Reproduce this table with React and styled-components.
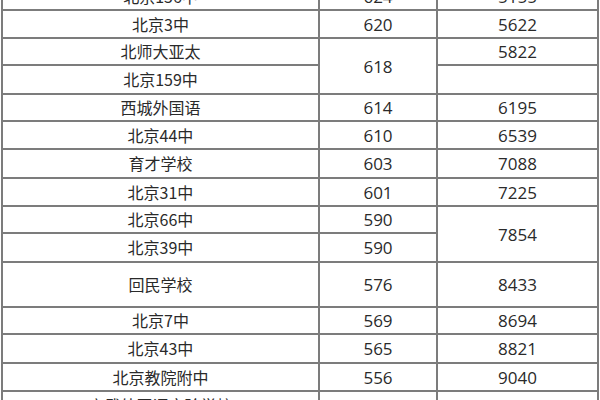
import React from 'react'
import styled, { createGlobalStyle } from 'styled-components'

const GlobalStyle = createGlobalStyle`
  html, body {
    margin: 0;
    padding: 0;
    background: #fff;
  }
`

const Frame = styled.div`
  width: 600px;
  height: 400px;
  overflow: hidden;
  padding-left: 1px;
  box-sizing: border-box;
`

const Table = styled.table`
  margin-top: -19px;
  width: 596px;
  border-collapse: collapse;
  table-layout: fixed;
  font-family: "Noto Sans CJK SC", "Liberation Sans", sans-serif;
  color: #2a2a2a;
  font-size: 16px;
`

const Row = styled.tr`
  height: ${p => p.h}px;
`

const Cell = styled.td`
  border: 2px solid #7c7c7c;
  text-align: center;
  vertical-align: ${p => (p.top ? 'top' : 'middle')};
  padding: 0;
  line-height: 25px;
`

const Num = styled(Cell)`
  font-family: "Open Sans", "Liberation Sans", sans-serif;
  font-size: 17px;
`

const rows = [
  { h: 28, name: '北京156中', score: '624', rank: '5155' },
  { h: 28, name: '北京3中', score: '620', rank: '5622' },
  { h: 27, name: '北师大亚太', score: '618', rank: '5822', scoreSpan: 2, rankTop: true },
  { h: 29, name: '北京159中', skipScore: true, rank: '' },
  { h: 27, name: '西城外国语', score: '614', rank: '6195' },
  { h: 28, name: '北京44中', score: '610', rank: '6539' },
  { h: 29, name: '育才学校', score: '603', rank: '7088' },
  { h: 28, name: '北京31中', score: '601', rank: '7225' },
  { h: 27, name: '北京66中', score: '590', rank: '7854', rankSpan: 2 },
  { h: 29, name: '北京39中', score: '590', skipRank: true },
  { h: 45, name: '回民学校', score: '576', rank: '8433' },
  { h: 27, name: '北京7中', score: '569', rank: '8694' },
  { h: 29, name: '北京43中', score: '565', rank: '8821' },
  { h: 28, name: '北京教院附中', score: '556', rank: '9040' },
  { h: 28, name: '宣武外国语实验学校', score: '555', rank: '9050' },
]

export default function App() {
  return (
    <Frame>
      <GlobalStyle />
      <Table>
        <colgroup>
          <col style={{ width: 317 }} />
          <col style={{ width: 118 }} />
          <col style={{ width: 161 }} />
        </colgroup>
        <tbody>
          {rows.map((r, i) => (
            <Row key={i} h={r.h}>
              <Cell>{r.name}</Cell>
              {!r.skipScore && <Num rowSpan={r.scoreSpan || 1}>{r.score}</Num>}
              {!r.skipRank && (
                <Num rowSpan={r.rankSpan || 1} top={r.rankTop}>
                  {r.rank}
                </Num>
              )}
            </Row>
          ))}
        </tbody>
      </Table>
    </Frame>
  )
}
